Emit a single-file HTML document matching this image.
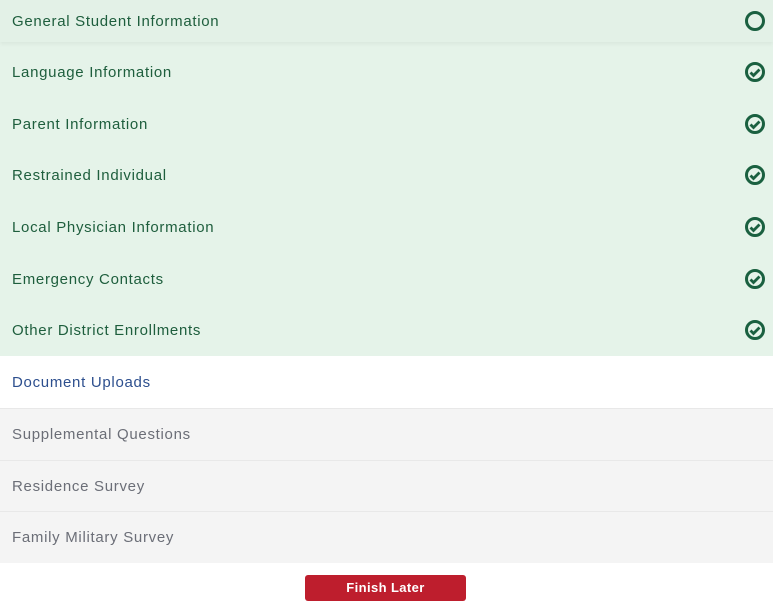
<!DOCTYPE html>
<html><head><style>
body{margin:0;width:773px;height:613px;background:#fff;font-family:"Liberation Sans",sans-serif;position:relative;overflow:hidden}
.r{position:absolute;left:0;width:773px;font-size:15px;letter-spacing:0.7px;box-sizing:border-box;padding-left:12px;display:flex;align-items:center}
.g{background:#e5f3e9;color:#1e5e3d}
.w{background:#fff;color:#2d4f8e}
.s{background:#f4f4f4;color:#6b6e77;border-top:1px solid #e8e8e8}
.ic{position:absolute;right:7px;top:50%;margin-top:-11px}
.btn{position:absolute;left:305px;top:575px;width:161px;height:26px;background:#be1e2d;border-radius:3px;color:#fff;font-size:13px;font-weight:bold;letter-spacing:0.4px;text-align:center;line-height:26px}
</style></head><body>
<div class="r g" style="top:0;height:356px"></div>
<div class="r g" style="top:0;height:42px;box-shadow:0 2px 4px rgba(0,0,0,.05);background:#e3f1e7">General Student Information<svg class="ic" width="22" height="22" viewBox="0 0 22 22"><circle cx="11" cy="11" r="8.5" fill="none" stroke="#1a6040" stroke-width="3"/></svg></div>
<div class="r g" style="top:46px;height:52px;background:transparent">Language Information<svg class="ic" width="22" height="22" viewBox="0 0 22 22"><circle cx="11" cy="11" r="8.5" fill="none" stroke="#1a6040" stroke-width="3"/><path d="M6.5 11.5l3 3 6-6" fill="none" stroke="#1a6040" stroke-width="2.8"/></svg></div>
<div class="r g" style="top:98px;height:52px;background:transparent">Parent Information<svg class="ic" width="22" height="22" viewBox="0 0 22 22"><circle cx="11" cy="11" r="8.5" fill="none" stroke="#1a6040" stroke-width="3"/><path d="M6.5 11.5l3 3 6-6" fill="none" stroke="#1a6040" stroke-width="2.8"/></svg></div>
<div class="r g" style="top:149px;height:52px;background:transparent">Restrained Individual<svg class="ic" width="22" height="22" viewBox="0 0 22 22"><circle cx="11" cy="11" r="8.5" fill="none" stroke="#1a6040" stroke-width="3"/><path d="M6.5 11.5l3 3 6-6" fill="none" stroke="#1a6040" stroke-width="2.8"/></svg></div>
<div class="r g" style="top:201px;height:52px;background:transparent">Local Physician Information<svg class="ic" width="22" height="22" viewBox="0 0 22 22"><circle cx="11" cy="11" r="8.5" fill="none" stroke="#1a6040" stroke-width="3"/><path d="M6.5 11.5l3 3 6-6" fill="none" stroke="#1a6040" stroke-width="2.8"/></svg></div>
<div class="r g" style="top:253px;height:52px;background:transparent">Emergency Contacts<svg class="ic" width="22" height="22" viewBox="0 0 22 22"><circle cx="11" cy="11" r="8.5" fill="none" stroke="#1a6040" stroke-width="3"/><path d="M6.5 11.5l3 3 6-6" fill="none" stroke="#1a6040" stroke-width="2.8"/></svg></div>
<div class="r g" style="top:304px;height:52px;background:transparent">Other District Enrollments<svg class="ic" width="22" height="22" viewBox="0 0 22 22"><circle cx="11" cy="11" r="8.5" fill="none" stroke="#1a6040" stroke-width="3"/><path d="M6.5 11.5l3 3 6-6" fill="none" stroke="#1a6040" stroke-width="2.8"/></svg></div>
<div class="r w" style="top:356px;height:52px">Document Uploads</div>
<div class="r s" style="top:408px;height:52px">Supplemental Questions</div>
<div class="r s" style="top:460px;height:51px">Residence Survey</div>
<div class="r s" style="top:511px;height:52px">Family Military Survey</div>
<div class="btn">Finish Later</div>
</body></html>
